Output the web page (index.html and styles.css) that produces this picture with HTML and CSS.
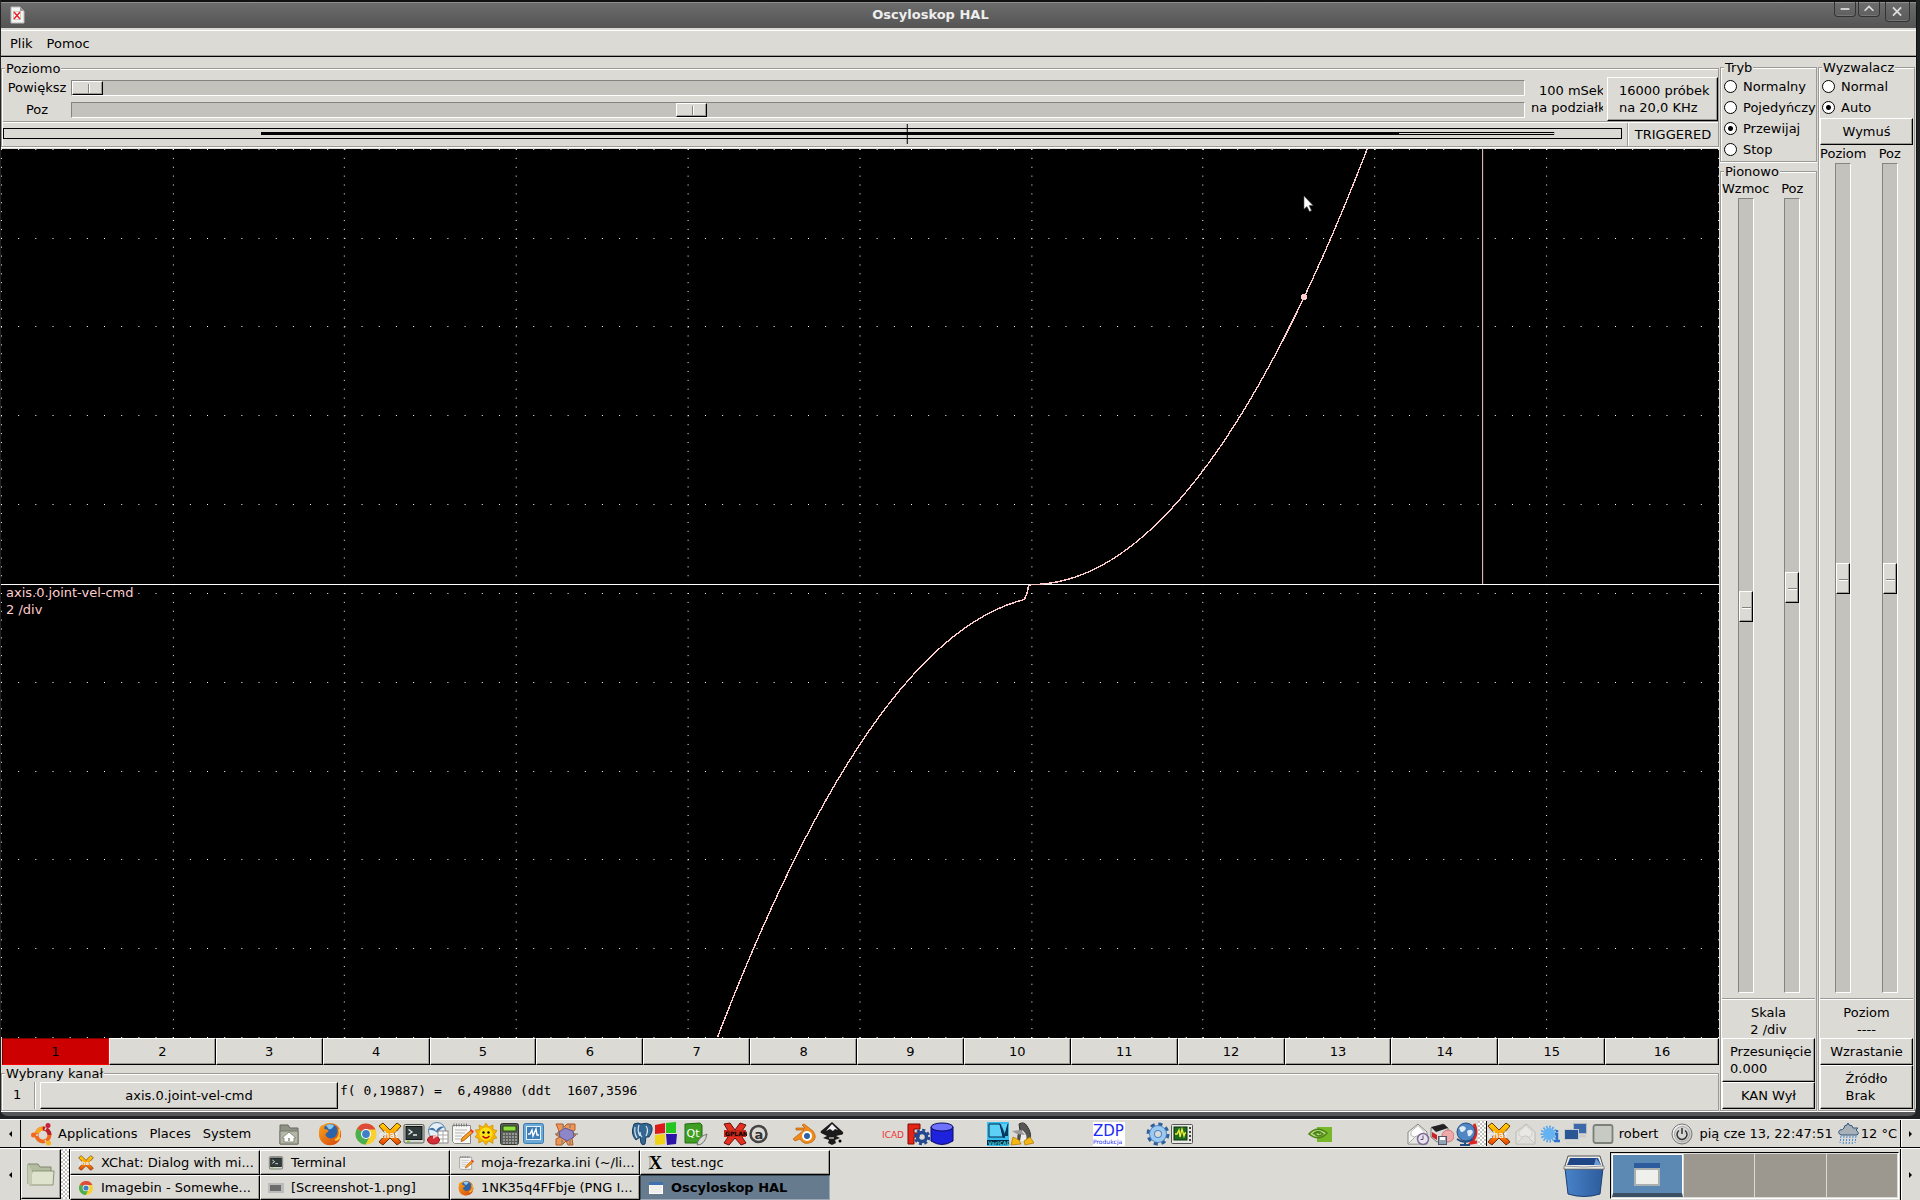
FILE: index.html
```html
<!DOCTYPE html>
<html lang="pl">
<head>
<meta charset="utf-8">
<title>Oscyloskop HAL</title>
<link rel="stylesheet" href="styles.css">
</head>
<body>
<svg class="defs" aria-hidden="true">
  <defs>
    <linearGradient id="blue" x1="0" y1="0" x2="0" y2="1"><stop offset="0" stop-color="#8fc0ea"/><stop offset="1" stop-color="#2f6fb0"/></linearGradient>
    <linearGradient id="fire" x1="0" y1="0" x2="1" y2="1"><stop offset="0" stop-color="#f7a21b"/><stop offset="1" stop-color="#d3430c"/></linearGradient>
    <linearGradient id="warm" x1="0" y1="0" x2="0" y2="1"><stop offset="0" stop-color="#ffd500"/><stop offset=".5" stop-color="#ff9a00"/><stop offset="1" stop-color="#e8380a"/></linearGradient>
    <linearGradient id="silver" x1="0" y1="0" x2="1" y2="1"><stop offset="0" stop-color="#ffffff"/><stop offset="1" stop-color="#b9bab6"/></linearGradient>
    <linearGradient id="bin" x1="0" y1="0" x2="1" y2="0"><stop offset="0" stop-color="#4a83c9"/><stop offset="1" stop-color="#2c5c9d"/></linearGradient>
  </defs>
  <symbol id="firefox" viewBox="0 0 24 24"><circle cx="12" cy="12" r="11" fill="url(#fire)"/><circle cx="12.500" cy="9.500" r="7.500" fill="#2b64a8"/><path d="M8 3.500q4-2.500 8 0l-2 3-3 1z" fill="#8ec9ee"/><path d="M1.500 6C3 3 5 3 5 3q0 3 2 4c3 0 4 2 3 3-2 1-3 2-2 4 2 3 6 3 9 1 3-3 3-7 2-10 5 4 5 11 1 15-5 5-13 4-17-1Q0 14 1.500 6z" fill="url(#fire)"/><path d="M21 7q2 8-4 11 3 0 5-3" fill="none" stroke="#ffc83a" stroke-width="1.500"/></symbol>
  <symbol id="chrome" viewBox="0 0 24 24"><circle cx="12" cy="12" r="10.500" fill="#f8d12f"/><path d="M12 12L2.900 6.700A10.500 10.500 0 0 1 21.500 7.500H12z" fill="#dd4b39"/><path d="M12 12L2.900 6.700A10.500 10.500 0 0 0 11.500 22.500L16 14z" fill="#4bae4f"/><circle cx="12" cy="12" r="5" fill="#fff"/><circle cx="12" cy="12" r="3.900" fill="#3e7fc8"/></symbol>
  <symbol id="xchat" viewBox="0 0 24 24"><path d="M1 4l4-3 7 7 7-7 4 3-7 8 7 8-4 3-7-7-7 7-4-3 7-8z" fill="url(#warm)" stroke="#6e3a00" stroke-width="1"/><text x="1" y="15.500" font-size="8" font-weight="bold" class="logo-text" fill="#eee">chat</text></symbol>
  <symbol id="terminal" viewBox="0 0 24 24"><rect x="2" y="2.500" width="20" height="18.500" rx="1.500" fill="#d3d7cf" stroke="#555753"/><rect x="4" y="4.500" width="16" height="13" fill="#303b3b" stroke="#111"/><path d="M6.500 7.500l3.500 2.500-3.500 2.500M11 13h4" fill="none" stroke="#e6ece6" stroke-width="1.300"/><path d="M5 19.500h3" stroke="#7c3" stroke-width="1.500"/></symbol>
  <symbol id="note" viewBox="0 0 24 24"><path d="M2.500 3.500h18v18h-16l-2-2z" fill="#f7f7f5" stroke="#888a85"/><path d="M4 1.500v3M6.500 1.500v3M9 1.500v3M11.500 1.500v3M14 1.500v3M16.500 1.500v3" stroke="#777" stroke-width="1"/><path d="M5 8h12M5 11h10M5 14h7M5 17h6" stroke="#b5b7b3"/><path d="M21 8l2 2.500-9 8-3 1 1-3.500z" fill="#f79a1f" stroke="#a4500a" stroke-width=".8"/><path d="M21 7l3 2.500-1.500 1.500-2.500-2.500z" fill="#e33"/></symbol>
  <symbol id="mail" viewBox="0 0 24 24"><path d="M2 10l10-8 9 8v12H2z" fill="#f4f4f2" stroke="#888a85"/><path d="M5 9.500l7-6 6 6v4l-6 3-7-3z" fill="#fff" stroke="#b9bbb7"/><path d="M2 22l8-8h3l8 8z" fill="#e6e6e3" stroke="#aaa"/></symbol>
</svg>

<main class="window">
  <header class="titlebar">
    <svg class="app-icon" viewBox="0 0 16 18"><path d="M2 1h9l4 4v12H2z" fill="#f3f3f1" stroke="#bbb"/><path d="M11 1v4h4" fill="#999"/><rect x="4.500" y="5.500" width="7" height="8" fill="#fff" stroke="#ccc"/><path d="M5 6l6 7M11 6l-6 7" stroke="#e22" stroke-width="1.500"/></svg>
    <h1>Oscyloskop HAL</h1>
    <button class="wm" aria-label="Minimalizuj"><svg viewBox="0 0 22 16"><path d="M6 8h10" stroke="#ddd" stroke-width="2"/></svg></button>
    <button class="wm" aria-label="Maksymalizuj"><svg viewBox="0 0 22 16"><path d="M6 10l5-5 5 5" fill="none" stroke="#ddd" stroke-width="2"/></svg></button>
    <button class="wm close" aria-label="Zamknij"><svg viewBox="0 0 24 21"><path d="M7 6l9 9M16 6l-9 9" stroke="#ddd" stroke-width="2"/></svg></button>
  </header>
  <nav class="menubar"><button>Plik</button><button>Pomoc</button></nav>

  <div class="workspace">
    <div class="left">
      <fieldset class="horizontal">
        <legend>Poziomo</legend>
        <div class="zoom-row">
          <div class="sliders">
            <label for="zoom">Powiększ</label><input class="range" id="zoom" type="range" min="0" max="1000" value="0">
            <label for="hpos">Poz</label><input class="range" id="hpos" type="range" min="0" max="1000" value="425">
          </div>
          <p class="per-div"><span>100 mSek</span><br>na podziałkę</p>
          <button class="btn samples">16000 próbek<br>na 20,0 KHz</button>
        </div>
        <div class="record-row">
          <div class="record">
            <svg viewBox="0 0 1624 21" preserveAspectRatio="none" shape-rendering="crispEdges"><rect x=".5" y="5.500" width="1622" height="10" fill="none" stroke="#000"/><rect x="259.500" y="9.500" width="1295" height="2" fill="none" stroke="#000"/><path d="M259 10.500h1140" stroke="#000" stroke-width="3"/><path d="M906.500 1v20" stroke="#000"/></svg>
          </div>
          <output class="state">TRIGGERED</output>
        </div>
      </fieldset>

      <div class="scope">
        <svg class="plot" viewBox="0 0 1719 889" preserveAspectRatio="none" shape-rendering="crispEdges">
          <g stroke="#fff" fill="none">
            <g stroke-dasharray="1 16.180">
              <path d="M0 .5h1719M0 89.500h1719M0 177.500h1719M0 266.500h1719M0 355.500h1719M0 444.500h1719M0 533.500h1719M0 622.500h1719M0 710.500h1719M0 799.500h1719M0 888.500h1719"/>
            </g>
            <g stroke-dasharray="1 7.880">
              <path d="M.5 0v889M172.500 0v889M343.500 0v889M515.500 0v889M687.500 0v889M859.500 0v889M1031.500 0v889M1202.500 0v889M1374.500 0v889M1546.500 0v889M1718.500 0v889"/>
            </g>
            <path d="M0 435.500h1719"/>
          </g>
          <g stroke="#ffcccc" fill="none">
            <path d="M1482.500 0v435"/>
            <path stroke-width="1.400" d="M717 888Q870.500 489 1024 450.500L1027 443L1028 437L1031 435.500Q1199 435.500 1367 0"/>
            <rect x="1301" y="146" width="6" height="4" fill="#ffcccc" stroke="none"/><rect x="1302" y="145" width="4" height="6" fill="#ffcccc" stroke="none"/>
          </g>
        </svg>
        <p class="trace">axis.0.joint-vel-cmd<br>2 /div</p>
        <svg class="cursor" viewBox="0 0 12 18"><path d="M1 1v13l3-2.500 2.500 5 2-1-2.500-5h4z" fill="#fff" stroke="#555" stroke-width=".6"/></svg>
      </div>

      <div class="channels">
        <button class="btn on">1</button><button class="btn">2</button><button class="btn">3</button><button class="btn">4</button><button class="btn">5</button><button class="btn">6</button><button class="btn">7</button><button class="btn">8</button><button class="btn">9</button><button class="btn">10</button><button class="btn">11</button><button class="btn">12</button><button class="btn">13</button><button class="btn">14</button><button class="btn">15</button><button class="btn">16</button>
      </div>
      <fieldset class="selected">
        <legend>Wybrany kanał</legend>
        <div class="selected-row">
          <span class="number">1</span>
          <button class="btn source">axis.0.joint-vel-cmd</button>
          <output class="readout">f( 0,19887) =  6,49880 (ddt  1607,3596)</output>
        </div>
      </fieldset>
    </div>

    <div class="side">
      <fieldset class="group">
        <legend>Tryb</legend>
        <div class="radios">
          <label><input type="radio" name="mode">Normalny</label>
          <label><input type="radio" name="mode">Pojedyńczy</label>
          <label><input type="radio" name="mode" checked>Przewijaj</label>
          <label><input type="radio" name="mode">Stop</label>
        </div>
      </fieldset>
      <fieldset class="group grow vertical">
        <legend>Pionowo</legend>
        <div class="faders">
          <div class="fader"><label for="gain">Wzmoc</label><input class="range v" id="gain" type="range" min="0" max="1000" value="514"></div>
          <div class="fader"><label for="vpos">Poz</label><input class="range v" id="vpos" type="range" min="0" max="1000" value="490"></div>
        </div>
        <p class="value">Skala<br>2 /div</p>
        <button class="btn offset">Przesunięcie<br>0.000</button>
        <button class="btn">KAN Wył</button>
      </fieldset>
    </div>

    <div class="side">
      <fieldset class="group grow">
        <legend>Wyzwalacz</legend>
        <div class="radios">
          <label><input type="radio" name="trigger">Normal</label>
          <label><input type="radio" name="trigger" checked>Auto</label>
        </div>
        <button class="btn">Wymuś</button>
        <div class="faders">
          <div class="fader"><label for="level">Poziom</label><input class="range v" id="level" type="range" min="0" max="1000" value="500"></div>
          <div class="fader"><label for="tpos">Poz</label><input class="range v" id="tpos" type="range" min="0" max="1000" value="500"></div>
        </div>
        <p class="value">Poziom<br>----</p>
        <button class="btn">Wzrastanie</button>
        <button class="btn origin"><span>Źródło<br>Brak</span></button>
      </fieldset>
    </div>
  </div>
</main>

<div class="panel top">
  <button class="hide" aria-label="Ukryj panel"><i class="arrow left-arrow"></i></button>
  <nav class="launchers">
    <svg class="ic" viewBox="0 0 24 24"><circle cx="13" cy="13" r="6.500" fill="none" stroke="#f06a1e" stroke-width="4"/><path d="M13 6.500A6.500 6.500 0 0 1 19.500 13" fill="none" stroke="#b8202a" stroke-width="4"/><path d="M7 11A6.500 6.500 0 0 1 12 6.500" fill="none" stroke="#f8a51b" stroke-width="4"/><path d="M18 2l-3 6M2 13h6M18 24l-3-6" stroke="#dcdad5" stroke-width="1.500"/><circle cx="18" cy="3.500" r="2.500" fill="#c7213c"/><circle cx="3.500" cy="13" r="2.500" fill="#f1671d"/><circle cx="18.500" cy="21" r="2.500" fill="#f8b21b"/></svg>
    <button class="menu">Applications</button><button class="menu">Places</button><button class="menu">System</button>
    <span class="set home"><svg class="ic" viewBox="0 0 24 24"><path d="M3 22V3h8l2 3h8v16z" fill="#8f9286" stroke="#66695e"/><path d="M3 9h18v13H3z" fill="#b3b6a6" stroke="#75786b"/><path d="M5 16l7-6 7 6h-2v4H7v-4z" fill="#fff" stroke="#8b8e80"/><path d="M11 16h2v3h-2z" fill="#a3a699"/></svg></span>
    <span class="set fox"><svg class="ic"><use href="#firefox"/></svg></span>
    <span class="set main-set">
      <svg class="ic"><use href="#chrome"/></svg><svg class="ic"><use href="#xchat"/></svg><svg class="ic"><use href="#terminal"/></svg>
      <svg class="ic" viewBox="0 0 24 24"><circle cx="11" cy="9" r="8.500" fill="#e6eef6" stroke="#5d83a8"/><path d="M2 8q5-5 8 1 3-6 9-4-5 1-7 6-5-4-10-3z" fill="#3f73a8"/><rect x="12" y="9" width="10" height="12" fill="#fff" stroke="#888"/><path d="M12 13h10M12 17h10M17 9v12" stroke="#aaa"/><ellipse cx="7.500" cy="18" rx="6" ry="4" fill="#d32f3b" stroke="#911"/><path d="M7 17l5-3-5-1z" fill="#f9b6b6"/></svg>
      <svg class="ic"><use href="#note"/></svg>
      <svg class="ic" viewBox="0 0 24 24"><path d="M12 1l2.500 4L19 3v4.500l4 1-2.500 4L23 16l-4 1v4.500L14.500 19 12 23l-3-4-4.500 2L5 17l-4-2 2.500-3L1 8l4.500-.5L5 3l4.500 2z" fill="#f4b400" stroke="#c68a00" stroke-width=".6"/><circle cx="12" cy="12" r="6.500" fill="#ffe11a"/><circle cx="9.500" cy="10.500" r="1.200"/><circle cx="14.500" cy="10.500" r="1.200"/><path d="M8.500 14q3.500 4 7 0" fill="none" stroke="#b00" stroke-width="1.300"/></svg>
      <svg class="ic" viewBox="0 0 24 24"><rect x="2.500" y="1.500" width="18" height="21" rx="2" fill="#5a5f58" stroke="#33372f"/><rect x="5" y="4" width="13" height="5" fill="#8fe03a" stroke="#27451b"/><path d="M5 12h14M5 15h14M5 18h14M5 21h14" stroke="#aaa" stroke-width="1.500" stroke-dasharray="2 1"/></svg>
      <svg class="ic" viewBox="0 0 24 24"><rect x="1.500" y="1.500" width="20" height="20" rx="2" fill="#6aa8d6" stroke="#3f7cad"/><rect x="4.500" y="4.500" width="14" height="13" fill="#3e7db5" stroke="#e6f1fa"/><path d="M6 12h2l2-4 1 6 3-7 1 6h2" fill="none" stroke="#fff" stroke-width="1.400"/></svg>
    </span>
    <span class="set split"><svg class="ic" viewBox="0 0 24 24"><path d="M2 2h7l1 3 3-3h8v6l-3 2 4 3-4 3 1 7h-5l-2-4-4 4H2v-6l4-2-4-2 3-4z" fill="#ef9557" stroke="#b55c22"/><path d="M5 10l6-4 8 3 1 6-7 4-7-4z" fill="#8d86c8" stroke="#5c568f"/><path d="M1 12h4M20 12h4M8 18v5M16 17v6M9 2v5M16 2v4" stroke="#887" stroke-width="1.500"/></svg></span>
    <span class="set db-set">
      <svg class="ic" viewBox="0 0 24 24"><path d="M4 2q4-2 7 0 6-2 10 1 3 5-2 12h-3l-1 7q-3 2-4-1l-1-6-4 3Q0 12 4 2z" fill="#336791" stroke="#1a3d5c"/><path d="M9 3q-2 6 1 11M16 4q3 4 0 10M12 15q-2-2-2-5M5 5q-1 6 2 11" fill="none" stroke="#d6e6f3" stroke-width="1.200"/></svg>
      <svg class="ic" viewBox="0 0 24 24"><path d="M1 3l10-2v10L1 12z" fill="#dc1a1a"/><path d="M12 1l10-1v11l-10 0z" fill="#25c522"/><path d="M1 13l10-1v10L1 23z" fill="#f0d313"/><path d="M12 12h11l-1 10-9 1z" fill="#2c14a8"/></svg>
    </span>
    <span class="set qt"><svg class="ic" viewBox="0 0 24 24"><path d="M1 2l15-1 2 2v18H1z" fill="#3e9e22" stroke="#256b12"/><text x="2.500" y="15" font-size="11" class="logo-text" fill="#fff">Qt</text><path d="M23 12q-9 3-10 11 8 0 10-11z" fill="#d8d8d4" stroke="#777"/></svg></span>
    <span class="set cut-set">
      <svg class="ic" viewBox="0 0 24 24"><path d="M1 2l6-1 5 7 5-7 6 2-6 9 6 9-5 2-6-7-6 7-5-2 6-9z" fill="#e5301f" stroke="#611"/><path d="M1 8h22v7H1z" fill="#c4281a"/><text x="2" y="14" font-size="6" font-weight="bold" class="logo-text">GPLAN</text></svg>
      <svg class="ic" viewBox="0 0 24 24"><circle cx="11.500" cy="12" r="8" fill="#dcdad5" stroke="#444" stroke-width="2.500"/><text x="7.500" y="16.500" font-size="13" font-weight="bold" class="logo-text" fill="#333">a</text></svg>
    </span>
    <span class="set blend"><svg class="ic" viewBox="0 0 24 24"><path d="M1 17L12 8H4V6h9l-3-3 2-1 9 7q5 7-1 11-8 4-12-3l-5 2z" fill="#f08a1c" stroke="#b65e08" stroke-width=".7"/><circle cx="15" cy="14" r="5" fill="#fff"/><circle cx="15" cy="14" r="3" fill="#2b62a8"/></svg></span>
    <span class="set ink"><svg class="ic" viewBox="0 0 24 24"><path d="M12 0l11 10q1 3-3 3l-4 1 4 2-5 2 1 3-4 2-4-2 1-3-6-2 4-2-6-3q-1-1 0-2z" fill="#1b1b1b"/><path d="M12 2l6 6-3-1-2 2-3-2-4 2z" fill="#f2f2f2"/><circle cx="20" cy="19" r="1.500"/><path d="M9 16h5" stroke="#fff"/></svg></span>
    <span class="set cad-set">
      <svg class="ic" viewBox="0 0 24 24"><text x="0" y="16" font-size="9" class="logo-text" fill="#e33">ICAD</text></svg>
      <svg class="ic" viewBox="0 0 24 24"><path d="M2 2h12v5H8v4h5v4H8v7H2z" fill="#e32417" stroke="#7d0d05"/><circle cx="16" cy="15" r="4.500" fill="none" stroke="#24478f" stroke-width="3.500"/><circle cx="16" cy="15" r="7" fill="none" stroke="#24478f" stroke-width="2.500" stroke-dasharray="3 2.500"/></svg>
      <svg class="ic" viewBox="0 0 24 24"><path d="M1 5v14q11 7 22 0V5z" fill="#1f22dc" stroke="#090b60"/><ellipse cx="12" cy="5" rx="11" ry="4" fill="#6f72ff" stroke="#090b60"/></svg>
    </span>
    <span class="set vari-set">
      <svg class="ic" viewBox="0 0 24 24"><path d="M1 0h22v24H1z" fill="#35bdf0"/><path d="M3 2h11l3 13h-14zM14 2l4 14 4-14" fill="#5cd0f7" stroke="#032c4b"/><path d="M15 2l4 10 3-10v12h-5z" fill="#063b61"/><path d="M1 18h22v5H1z" fill="#042b42"/><text x="2" y="22.500" font-size="5" font-weight="bold" class="logo-text" fill="#4cd">VariCAD</text></svg>
      <svg class="ic" viewBox="0 0 24 24"><path d="M9 2q5-3 8 2 5 7 3 14H8q-1-5 2-9z" fill="#555" stroke="#333"/><path d="M12 8q6 4 4 11h-6z" fill="#ecece8"/><path d="M2 9l9-1 4 5-8-1z" fill="#999"/><path d="M3 15l6 3 2 4-10 1zM14 19l6-4 4 6-9 2z" fill="#f7b712" stroke="#a87305" stroke-width=".7"/></svg>
    </span>
    <span class="set zdp"><svg class="wide-ic" viewBox="0 0 32 24"><path d="M0 0h32v24H0z" fill="#fff"/><text x="0" y="14" font-size="15" class="logo-text" fill="#1c2cf5">ZDP</text><text x="0" y="22" font-size="6" class="logo-text" fill="#1c2cf5">Produkcja</text></svg></span>
    <span class="set gear-set">
      <svg class="ic" viewBox="0 0 24 24"><circle cx="12" cy="12" r="9.500" fill="none" stroke="#2f5f9c" stroke-width="4" stroke-dasharray="4 3.460"/><circle cx="12" cy="12" r="6" fill="none" stroke="#4d86c4" stroke-width="6"/><circle cx="12" cy="12" r="6" fill="none" stroke="#9cc9ef" stroke-width="4"/></svg>
      <svg class="ic" viewBox="0 0 24 24"><rect x="1.500" y="2.500" width="21" height="19" rx="1" fill="#e9e9e6" stroke="#555"/><rect x="4" y="5" width="13" height="13" fill="#1f6b1f" stroke="#0a330a"/><path d="M5 12h2l2-4 1 7 2-8 2 7 1-3h1" fill="none" stroke="#f3f13a" stroke-width="1.300"/><path d="M20 5v14" stroke="#444" stroke-width="2" stroke-dasharray="2 2"/></svg>
    </span>
    <span class="set nv"><svg class="ic" viewBox="0 0 24 24"><path d="M9 5h15v15H9z" fill="#76b82a"/><path d="M1 12q8-9 18-1-8 9-18 1zM5 12q5-5 10 0-5 4-8 0 3-3 5 0" fill="#b9d98b" stroke="#4c8414" stroke-width="1.600"/></svg></span>

    <span class="set tray">
      <svg class="ic" viewBox="0 0 24 24"><use href="#mail"/><circle cx="17" cy="17" r="5.500" fill="#e9e3ee" stroke="#7d6a93" stroke-width="1.500"/><path d="M17 13.500v4h-2.500" fill="none" stroke="#63507a"/></svg>
      <svg class="ic" viewBox="0 0 24 24"><path d="M1 6l12-4 5 4v11L7 20l-6-5z" fill="#dcdcdc" stroke="#777"/><path d="M1 5l13-3 4 4-12 4z" fill="#222"/><path d="M2 10l5 3v5l-5-3z" fill="#c22"/><circle cx="18" cy="14" r="6" fill="#eaa" stroke="#c77"/><rect x="8.500" y="14.500" width="8" height="8" fill="#8ea3b3" stroke="#556"/><path d="M10 15h5v3h-5z" fill="#fff"/></svg>
      <svg class="ic" viewBox="0 0 24 24"><path d="M20 2q5 10-3 19l6-1" fill="none" stroke="#d22" stroke-width="3"/><circle cx="12" cy="10" r="9" fill="#4f86c4" stroke="#274e83"/><path d="M5 6q4-4 7 0-1 4-5 4zM13 9q5-3 6 1-2 5-5 4z" fill="#dfeaf5"/><path d="M3 17q8 6 16 0M11 20v3M6 23h10" fill="none" stroke="#274e83" stroke-width="2"/></svg>
    </span>
    <i class="grip"></i>
    <svg class="ic"><use href="#xchat"/></svg>
    <svg class="ic faded"><use href="#mail"/></svg>
    <svg class="ic sun-info" viewBox="0 0 24 24"><circle cx="10" cy="12" r="7" fill="none" stroke="#53a3ea" stroke-width="3" stroke-dasharray="1.500 1.500"/><circle cx="10" cy="12" r="6" fill="#65b2f3"/><path d="M16 12h2v7M15 19h6M18 8v2" stroke="#2c72c9" stroke-width="2.500" fill="none"/></svg>
    <svg class="ic" viewBox="0 0 24 24"><rect x="10.500" y="1.500" width="13" height="10" fill="#3a6aa9" stroke="#b7bbc0"/><path d="M12 14h11" stroke="#ccc" stroke-width="3"/><rect x="1.500" y="7.500" width="14" height="10" fill="#2a5694" stroke="#c6cacd"/><path d="M3 21h13" stroke="#d4d6d3" stroke-width="3"/></svg>
    <svg class="ic user-box" viewBox="0 0 24 24"><rect x="2.500" y="3" width="19" height="18" rx="2" fill="#c7c9c3" stroke="#7d7f7b" stroke-width="1.800"/></svg>
    <button class="menu">robert</button>
    <svg class="ic power" viewBox="0 0 24 24"><circle cx="12" cy="12" r="10" fill="url(#silver)" stroke="#777"/><circle cx="12" cy="12" r="7.500" fill="#d5d6d3" stroke="#aaa"/><path d="M9 8.500a5 5 0 1 0 6 0M12 6v6" fill="none" stroke="#333" stroke-width="1.500"/></svg>
    <time class="menu">pią cze 13, 22:47:51</time>
    <svg class="ic weather" viewBox="0 0 24 24"><path d="M4 13q-4-2-1-5 3 0 4-2 0-3 3-3l1-2 1 2q4 0 4 3l5 0-2 2q4 3 1 5z" fill="#a9b1b8" stroke="#2f567f"/><path d="M4 14l-1 7M7 14l-1 9M10 14l-1 9M13 14l-1 9M16 14l-1 9M19 14l-1 7" stroke="#4a86c8" stroke-dasharray="2 1"/></svg>
    <span class="menu temp">12 °C</span>
  </nav>
  <button class="hide" aria-label="Ukryj panel"><i class="arrow right-arrow"></i></button>
</div>

<div class="panel bottom">
  <button class="hide" aria-label="Ukryj panel"><i class="arrow left-arrow"></i></button>
  <button class="btn desktop" aria-label="Pliki"><svg viewBox="0 0 30 28"><path d="M2 24V4h10l2 3h11v6" fill="#b4bca0" stroke="#7f886d"/><path d="M4 25l2-14h22l-1 14z" fill="#dde3cc" stroke="#8c9577"/><path d="M2 24V4l4 7v14z" fill="#c4cbb2"/></svg></button>
  <i class="grip"></i>
  <nav class="tasks">
    <button class="btn"><svg class="tic"><use href="#xchat"/></svg>XChat: Dialog with mi...</button>
    <button class="btn"><svg class="tic"><use href="#terminal"/></svg>Terminal</button>
    <button class="btn"><svg class="tic"><use href="#note"/></svg>moja-frezarka.ini (~/li...</button>
    <button class="btn"><svg class="tic" viewBox="0 0 16 16"><path d="M0 2h2v12H0" fill="none" stroke="#999"/><text x="1" y="14" font-size="18" font-weight="bold" font-family="Liberation Serif, serif">X</text></svg>test.ngc</button>
    <button class="btn"><svg class="tic"><use href="#chrome"/></svg>Imagebin - Somewhe...</button>
    <button class="btn"><svg class="tic" viewBox="0 0 16 16"><path d="M0 3h16v10H0z" fill="#bbb"/><path d="M2 5h11v6H2z" fill="#6c6c6c"/></svg>[Screenshot-1.png]</button>
    <button class="btn"><svg class="tic"><use href="#firefox"/></svg>1NK35q4FFbje (PNG I...</button>
    <button class="btn active"><svg class="tic" viewBox="0 0 16 16"><rect x="1.500" y="2.500" width="13" height="11" fill="#eeeeea" stroke="#fff"/><path d="M1 2h14v3H1z" fill="#3f70b0"/></svg>Oscyloskop HAL</button>
  </nav>
  <svg class="trash" viewBox="0 0 44 44"><path d="M3 14h38l-3 26q-16 5-32 0z" fill="url(#bin)" stroke="#1c4070"/><path d="M6 2h32l4 13H2z" fill="#eeeeec" stroke="#555753"/><path d="M8 4h28l3 7H5z" fill="#1f4787"/><path d="M34 4l5 7h-7z" fill="#6b9bd6"/><path d="M2 12q20 2 40 0v3H2z" fill="#e8e8e6" stroke="#777" stroke-width=".7"/></svg>
  <div class="pager">
    <button class="current" aria-label="Pulpit 1"><svg viewBox="0 0 28 25"><path d="M1 1h26v7H1z" fill="#2d5c9c"/><rect x="2" y="7" width="24" height="16" fill="#efefeb" stroke="#aab0b0" stroke-width="2"/></svg></button><button aria-label="Pulpit 2"></button><button aria-label="Pulpit 3"></button><button aria-label="Pulpit 4"></button>
  </div>
  <button class="hide" aria-label="Ukryj panel"><i class="arrow right-arrow"></i></button>
</div>
</body>
</html>
```
FILE: styles.css
```css
:root {
  --bg: #dcdad5;
  --dark: #9c9a94;
  --trough: #c4c2bd;
}

* { box-sizing: border-box; }

body {
  margin: 0;
  height: 100vh;
  display: flex;
  flex-direction: column;
  background: #202324;
  font: 13px/17px "DejaVu Sans", sans-serif;
  color: #000;
}

.defs { position: absolute; width: 0; height: 0; }
.logo-text { font-family: "DejaVu Sans", sans-serif; }
p, h1 { margin: 0; }
button { font: inherit; color: inherit; margin: 0; padding: 0; border: 0; background: none; white-space: nowrap; }
svg { display: block; flex: none; }

/* Raised button */
.btn {
  flex: none;
  min-height: 27px;
  background: var(--bg);
  border: 1px solid;
  border-color: #fff #000 #000 #fff;
  box-shadow: inset -1px -1px 0 var(--dark);
}

/* Window frame */
.window {
  flex: 1;
  min-height: 0;
  margin: 0 3px 3px 0;
  display: flex;
  flex-direction: column;
  background: var(--bg);
  border-left: 1px solid #222;
  border-right: 1px solid #111;
  border-bottom: 4px solid #555857;
  border-radius: 6px 6px 8px 8px;
}
.titlebar {
  flex: none;
  height: 28px;
  display: flex;
  align-items: flex-start;
  gap: 2px;
  padding: 0 6px 0 8px;
  border-top: 2px solid #111;
  background: linear-gradient(#8f8f8f 0 1px, #6c6c6c 1px, #545454);
}
.titlebar h1 {
  flex: 1;
  padding-left: 2px;
  text-align: center;
  font-size: 13px;
  line-height: 25px;
  color: #eee;
}
.app-icon { width: 16px; height: 18px; margin-top: 4px; }
.wm {
  width: 22px;
  height: 15px;
  border: 1px solid #333;
  border-top: 0;
  border-radius: 0 0 4px 4px;
  box-shadow: inset 0 -1px 0 #777;
}
.wm svg { width: 20px; height: 14px; }
.wm.close { width: 25px; height: 20px; margin-left: 3px; }
.wm.close svg { width: 23px; height: 19px; }

.menubar {
  flex: none;
  height: 27px;
  margin-top: 2px;
  display: flex;
  gap: 14px;
  padding: 0 9px;
  border-top: 1px solid #fff;
  border-bottom: 1px solid #000;
  box-shadow: inset 0 -1px 0 var(--dark);
}

.workspace {
  flex: 1;
  min-height: 0;
  display: grid;
  grid-template-columns: 1fr 97px 97px;
  gap: 1px;
  padding: 2px 1px 1px 0;
}
.left, .side { display: flex; flex-direction: column; min-width: 0; min-height: 0; }

/* Etched group frames */
fieldset {
  flex: none;
  min-width: 0;
  margin: 0;
  padding: 0 1px 1px;
  border: 1px solid var(--dark);
  box-shadow: inset 1px 1px 0 #fff, 0 1px 0 #fff;
}
legend { margin-left: 2px; padding: 0 1px; line-height: 17px; background: var(--bg); }
.grow { flex: 1; display: flex; flex-direction: column; min-height: 0; }
.vertical { margin-top: 1px; }

/* Sliders */
.range {
  appearance: none;
  width: 100%;
  height: 16px;
  margin: 0;
  background: var(--trough);
  border: 1px solid;
  border-color: #86847f #fff #fff #86847f;
}
.range::-webkit-slider-thumb {
  appearance: none;
  width: 31px;
  height: 14px;
  border: 1px solid;
  border-color: #fff #000 #000 #fff;
  box-shadow: inset -1px -1px 0 var(--dark);
  background: linear-gradient(90deg, #86847f 1px, #fff 1px) 15px 2px / 2px 9px no-repeat, var(--bg);
}
.range.v {
  writing-mode: vertical-lr;
  flex: 1;
  min-height: 0;
  width: 16px;
  height: auto;
}
.range.v::-webkit-slider-thumb {
  width: 14px;
  height: 31px;
  background: linear-gradient(#86847f 1px, #fff 1px) 2px 15px / 9px 2px no-repeat, var(--bg);
}

/* Horizontal controls */
.horizontal { margin-top: 1px; padding: 0 0 0 1px; }
.zoom-row { display: flex; height: 44px; }
.sliders {
  flex: 1;
  display: grid;
  grid-template-columns: 68px 1fr;
  grid-template-rows: 17px 17px;
  row-gap: 5px;
  padding-top: 2px;
  align-items: center;
  text-align: center;
}
.per-div { width: 72px; margin: 5px 4px 0 6px; overflow: hidden; white-space: nowrap; }
.per-div span { margin-left: 8px; }
.samples { width: 111px; height: 44px; padding-left: 11px; text-align: left; }
.record-row { display: flex; height: 25px; border-top: 1px solid var(--dark); box-shadow: inset 0 1px 0 #fff; }
.record { flex: 1; }
.record svg { width: 100%; height: 21px; margin-top: 1px; }
.state { width: 91px; margin: 1px 0 0 4px; border-left: 1px solid var(--dark); line-height: 24px; text-align: center; box-shadow: inset 1px 0 0 #fff; }

/* Trace display */
.scope { flex: 1; min-height: 0; margin-top: 2px; position: relative; background: #000; overflow: hidden; }
.plot { width: 100%; height: 100%; }
.trace { position: absolute; left: 5px; top: 50%; color: #ffcccc; margin-top: -10px; }
.cursor { position: absolute; left: 75.8%; top: 5.2%; width: 12px; height: 18px; }

.channels { flex: none; display: grid; grid-template-columns: repeat(15, 107fr) 114fr; padding-left: 1px; }
.channels .on { background: #c00; border-color: #700 #f00 #f00 #700; box-shadow: none; }
.selected-row { display: flex; height: 27px; }
.number { width: 32px; line-height: 26px; padding-left: 10px; border-right: 1px solid var(--dark); box-shadow: 1px 0 0 #fff; }
.source { width: 298px; margin-left: 5px; }
.readout { width: 302px; padding-left: 2px; overflow: hidden; white-space: pre; font-family: "DejaVu Sans Mono", monospace; }

/* Side columns */
.radios { display: flex; flex-direction: column; }
.radios label { display: flex; align-items: center; gap: 6px; height: 21px; padding-left: 2px; white-space: nowrap; }
.radios input {
  appearance: none;
  flex: none;
  width: 13px;
  height: 13px;
  margin: 0;
  border: 1px solid #000;
  border-radius: 50%;
  background: #fff;
}
.radios input:checked { background: radial-gradient(#000 2px, #fff 3px); }
.faders { flex: 1; min-height: 0; display: grid; grid-template-columns: 1fr 1fr; justify-items: center; padding-bottom: 5px; }
.fader { display: flex; flex-direction: column; align-items: center; min-height: 0; gap: 1px; }
.value { text-align: center; padding: 5px 0; line-height: 17px; border-top: 1px solid var(--dark); box-shadow: inset 0 1px 0 #fff; height: 40px; }
.offset { height: 44px; padding-left: 7px; text-align: left; }
.origin { height: 44px; }
.origin span { display: inline-block; text-align: left; }

/* Desktop panels */
.panel { flex: none; display: flex; background: var(--bg); border-top: 1px solid #fff; }
.top { height: 29px; border-bottom: 1px solid #000; }
.bottom { height: 52px; }
.hide { flex: none; width: 21px; border-right: 1px solid #000; display: grid; place-items: center; }
.hide:last-child { border: 0; border-left: 1px solid #000; width: 20px; box-shadow: inset 1px 0 0 #fff; }
.arrow { border: 3px solid transparent; }
.left-arrow { border-right-color: #000; border-left: 0; }
.right-arrow { border-left-color: #000; border-right: 0; }

.launchers { flex: 1; min-width: 0; display: flex; align-items: center; padding-left: 9px; }
.ic { width: 24px; height: 24px; }
.wide-ic { width: 32px; height: 24px; }
.set { display: flex; }
.menu { margin-left: 12px; white-space: nowrap; }
.ic + .menu { margin-left: 4px; }
.home { margin-left: 26px; }
.fox { margin-left: 17px; }
.main-set { margin-left: 12px; }
.split { margin-left: 8px; }
.db-set { margin-left: 52px; }
.qt { margin-left: 6px; }
.cut-set { margin-left: 15px; }
.blend { margin-left: 21px; }
.ink { margin-left: 4px; }
.cad-set { margin-left: 38px; }
.vari-set { margin-left: 32px; }
.zdp { margin-left: 59px; }
.gear-set { margin-left: 21px; }
.nv { margin-left: 114px; }
.tray { margin-left: auto; }
.grip {
  flex: none;
  width: 9px;
  height: 25px;
  background: repeating-conic-gradient(#fff 0 25%, var(--trough) 0 50%) 0 0 / 4px 4px;
  border-right: 1px solid #000;
}
.faded { opacity: 0.4; margin-left: 3px; }
.sun-info { margin-left: 1px; }
.user-box { margin-left: 4px; }
.power { margin-left: 12px; }
.power + .menu { margin-left: 5px; }
.weather { margin-left: 4px; }
.weather + .temp { margin: 0 3px 0 0; }

.bottom .grip { height: 50px; }
.desktop { width: 40px; height: 50px; padding-left: 4px; }
.desktop svg { width: 30px; height: 28px; }
.tasks { display: grid; grid-template-columns: repeat(4, 190px); grid-template-rows: 25px 25px; padding-top: 1px; }
.tasks .btn { min-height: 25px; display: flex; align-items: center; gap: 7px; padding-left: 7px; overflow: hidden; }
.tic { width: 16px; height: 16px; }
.tasks .active { background: #677b8f; border-color: #3d4c5b #9aa8b5 #9aa8b5 #3d4c5b; box-shadow: none; font-weight: bold; }
.trash { width: 44px; height: 44px; margin: 5px 4px 0 auto; }
.pager {
  width: 289px;
  height: 47px;
  margin: 3px 1px 0 0;
  padding: 1px;
  display: grid;
  grid-template-columns: repeat(4, 1fr);
  gap: 1px;
  background: #dcdad5;
  border: 1px solid;
  border-color: #000 #fff #fff #000;
}
.pager button { background: #9c9890; display: grid; place-items: center; }
.pager .current { background: #5b89b4; border: 1px solid #fff; border-bottom: 4px solid #3b5063; }
.pager svg { width: 28px; height: 25px; }
```
